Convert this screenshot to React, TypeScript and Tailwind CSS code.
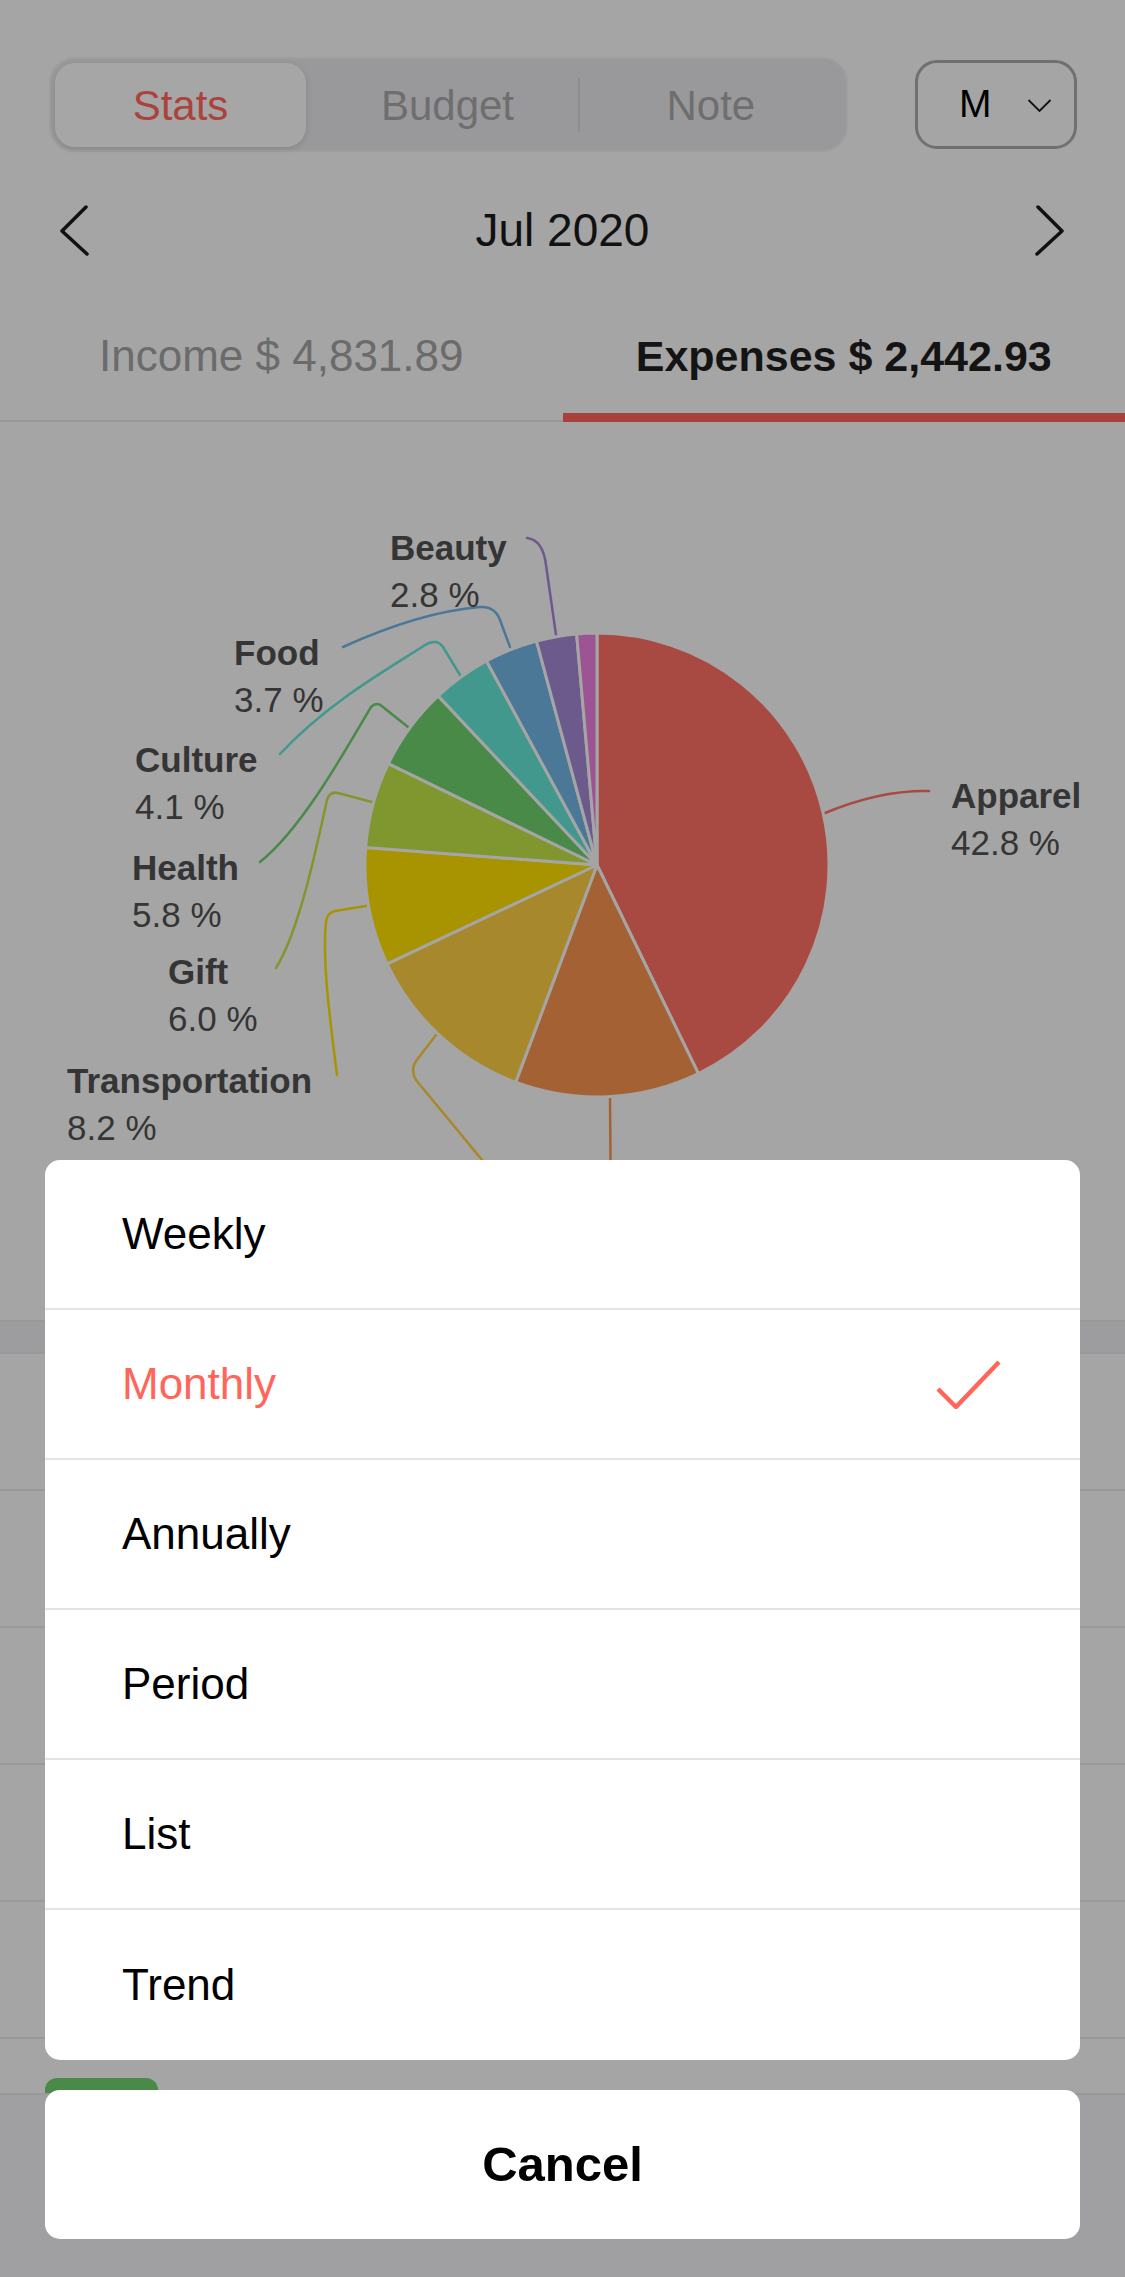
import React from "react";

const font = { fontFamily: '"Liberation Sans", Arial, sans-serif' };

// pie data, clockwise from 12 o'clock (colours as seen under the dim overlay)
const slices = [
  { pct: 42.8, color: "#a84a42" },
  { pct: 12.9, color: "#a46234" },
  { pct: 12.3, color: "#a8882c" },
  { pct: 8.2, color: "#a89400" },
  { pct: 6.0, color: "#80962f" },
  { pct: 5.8, color: "#4a8a48" },
  { pct: 4.1, color: "#42988c" },
  { pct: 3.7, color: "#4a7896" },
  { pct: 2.8, color: "#6c5a8c" },
  { pct: 1.4, color: "#9c5494" },
];

const labels = [
  { x: 951, y: 808, name: "Apparel", pct: "42.8 %" },
  { x: 390, y: 560, name: "Beauty", pct: "2.8 %" },
  { x: 234, y: 665, name: "Food", pct: "3.7 %" },
  { x: 135, y: 772, name: "Culture", pct: "4.1 %" },
  { x: 132, y: 880, name: "Health", pct: "5.8 %" },
  { x: 168, y: 984, name: "Gift", pct: "6.0 %" },
  { x: 67, y: 1093, name: "Transportation", pct: "8.2 %" },
];

const leaders = [
  { d: "M825 813 Q880 790 929 791", color: "#a84a42" },
  { d: "M610 1097 L611 1220", color: "#a46234" },
  { d: "M436 1035 L416 1061 Q410 1070 416 1080 L540 1230", color: "#a8882c" },
  { d: "M366 906 L335 911 Q327 913 326 922 C322 960 330 1020 337 1075", color: "#a89400" },
  { d: "M372 802 L338 793 Q330 791 327 800 C318 840 300 930 276 968", color: "#80962f" },
  { d: "M408 727 L383 707 Q377 701 371 707 C340 760 300 830 260 862", color: "#4a8a48" },
  { d: "M460 675 L443 647 Q437 638 425 645 C395 665 330 700 280 754", color: "#42988c" },
  { d: "M510 647 L500 620 Q495 606 480 607 Q420 612 343 647", color: "#4a7896" },
  { d: "M556 635 L546 565 Q543 540 527 538", color: "#6c5a8c" },
];

function Pie() {
  const cx = 597;
  const cy = 865;
  const r = 232;
  const pt = (a: number) => {
    const rad = (a * Math.PI) / 180;
    return [cx + r * Math.sin(rad), cy - r * Math.cos(rad)];
  };
  let acc = 0;
  return (
    <svg width="1125" height="898" viewBox="0 422 1125 898" className="block">
      {leaders.map((l, i) => (
        <path key={i} d={l.d} fill="none" stroke={l.color} strokeWidth="2.5" strokeLinecap="round" />
      ))}
      {slices.map((s, i) => {
        const a0 = acc * 3.6;
        acc += s.pct;
        const a1 = acc * 3.6;
        const [x0, y0] = pt(a0);
        const [x1, y1] = pt(a1);
        const large = a1 - a0 > 180 ? 1 : 0;
        return (
          <path
            key={i}
            d={`M${cx} ${cy} L${x0} ${y0} A${r} ${r} 0 ${large} 1 ${x1} ${y1} Z`}
            fill={s.color}
            stroke="#a5a5a5"
            strokeWidth="3"
            strokeLinejoin="round"
          />
        );
      })}
      {labels.map((l) => (
        <g key={l.name} fill="#353535" style={font}>
          <text x={l.x} y={l.y} fontSize="35" fontWeight="700">
            {l.name}
          </text>
          <text x={l.x} y={l.y + 47} fontSize="35">
            {l.pct}
          </text>
        </g>
      ))}
    </svg>
  );
}

const options = ["Weekly", "Monthly", "Annually", "Period", "List", "Trend"];

export default function App() {
  return (
    <div className="relative w-[1125px] h-[2277px] overflow-hidden bg-[#a5a5a5]" style={font}>
      {/* page under the dim */}
      <div className="flex flex-col h-full">
        <div className="flex items-center pt-[57px] pl-[49px] pr-[48px]">
          <div className="w-[799px] h-[95px] rounded-[26px] bg-[#99999b] border-2 border-[#9e9e9e] p-[4px] grid grid-cols-3 items-center">
            <div className="h-[84px] w-[251px] rounded-[20px] bg-[#a6a6a6] shadow-[0_2px_6px_rgba(0,0,0,0.12)] flex items-center justify-center text-[42px] text-[#ab423b]">
              Stats
            </div>
            <div className="flex items-center justify-center text-[42px] text-[#6e6e6e] border-r-2 border-[#8d8d8f] h-[54px]">
              Budget
            </div>
            <div className="flex items-center justify-center text-[42px] text-[#6e6e6e]">Note</div>
          </div>
          <div className="ml-auto w-[162px] h-[89px] rounded-[22px] border-[3px] border-[#707070] flex items-center pl-[41px] gap-[35px]">
            <span className="text-[39px] text-black">M</span>
            <svg width="26" height="16" viewBox="0 0 26 16">
              <polyline points="1.5,3 12.5,14 23.5,3" fill="none" stroke="#111" strokeWidth="1.8" />
            </svg>
          </div>
        </div>

        <div className="mt-[28px] h-[100px] flex items-center justify-between px-[60px]">
          <svg width="30" height="52" viewBox="0 0 30 52">
            <polyline points="26,3 2,27 27,50" fill="none" stroke="#111" strokeWidth="3.5" strokeLinecap="round" strokeLinejoin="round" />
          </svg>
          <span className="text-[46px] text-[#111]">Jul 2020</span>
          <svg width="30" height="52" viewBox="0 0 30 52">
            <polyline points="3,3 27,27 2,50" fill="none" stroke="#111" strokeWidth="3.5" strokeLinecap="round" strokeLinejoin="round" />
          </svg>
        </div>

        <div className="grid grid-cols-2">
          <div className="h-[142px] border-b-2 border-[#979797] flex items-center justify-center pt-[12px] text-[44px] text-[#6b6b6b]">
            Income $ 4,831.89
          </div>
          <div className="h-[142px] border-b-[9px] border-[#a8413b] flex items-center justify-center pt-[19px] text-[43px] font-bold text-[#141414]">
            Expenses $ 2,442.93
          </div>
        </div>

        <Pie />

        <div className="h-[32px] bg-[#9d9d9f] border-t-2 border-[#999]" />
        {[0, 1, 2, 3, 4].map((i) => (
          <div key={i} className="h-[137px] border-t-2 border-[#999]" />
        ))}
        <div className="h-[56px] border-t-2 border-[#999] pl-[45px] pt-[39px]">
          <div className="w-[113px] h-[30px] rounded-t-[12px] bg-[#4a8a48]" />
        </div>
        <div className="flex-1 bg-[#a0a0a2] border-t-2 border-[#999]" />
      </div>

      {/* action sheet */}
      <div className="absolute inset-0 flex flex-col justify-end px-[45px] pb-[38px] gap-[30px]">
        <div className="rounded-[15px] bg-white overflow-hidden">
          {options.map((o, i) => (
            <div
              key={o}
              className={`h-[150px] flex items-center justify-between pl-[77px] pr-[78px] text-[44px] ${
                i < options.length - 1 ? "border-b-2 border-[#e4e4e4]" : ""
              } ${o === "Monthly" ? "text-[#ff6559]" : "text-black"}`}
            >
              <span>{o}</span>
              {o === "Monthly" && (
                <svg width="66" height="50" viewBox="0 0 66 50">
                  <polyline points="2,30 20,48 63,3" fill="none" stroke="#ff6559" strokeWidth="4.5" strokeLinejoin="round" />
                </svg>
              )}
            </div>
          ))}
        </div>
        <div className="h-[149px] rounded-[15px] bg-white flex items-center justify-center text-[49px] font-bold text-black">
          Cancel
        </div>
      </div>
    </div>
  );
}
